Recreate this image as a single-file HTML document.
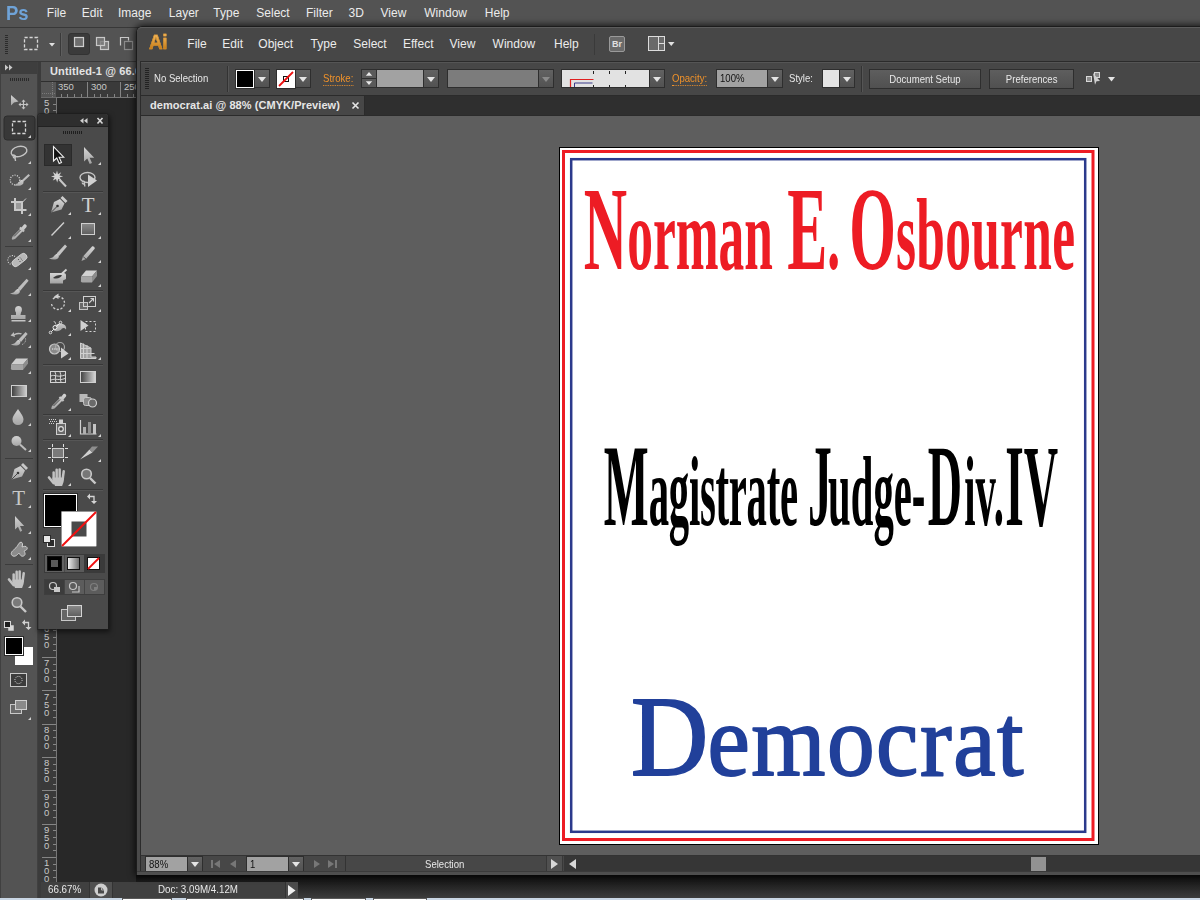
<!DOCTYPE html>
<html lang="en">
<head>
<meta charset="utf-8">
<title>democrat.ai</title>
<style>
*{box-sizing:border-box;margin:0;padding:0}
html,body{width:1200px;height:900px;overflow:hidden}
body{background:#535353;font-family:"Liberation Sans",sans-serif;font-size:12px;color:#e6e6e6;position:relative}
.abs,.abs>*{position:absolute}
.abs{position:absolute}
.t{position:absolute;white-space:nowrap;line-height:1}
svg{position:absolute;overflow:visible}
/* ---------- Photoshop ---------- */
#ps-menu{left:0;top:0;width:1200px;height:27px;background:#535353}
#ps-menu .t{top:7px;font-size:12px;color:#ececec}
#ps-menu #ps-logo{left:6px;top:1.5px;font-size:21px;font-weight:bold;color:#6fa3d8;transform:scaleX(.88);transform-origin:0 0}
#ps-opt{left:0;top:27px;width:140px;height:35px;background:#535353;border-top:1px solid #383838;border-bottom:1px solid #383838}
#ps-tools{left:0;top:62px;width:38px;height:836px;background:#535353}
#ps-tools-h{left:0;top:62px;width:38px;height:12px;background:#3e3e3e}
#ps-gap{left:38px;top:62px;width:3px;height:836px;background:#3b3b3b}
#ps-tab{left:41px;top:62px;width:100px;height:19px;background:#535353}
#ps-rh{left:41px;top:81px;width:100px;height:17px;background:#3a3a3a;border-bottom:1px solid #6a6a6a}
#ps-rc{left:41px;top:81px;width:16px;height:16px;background:#555}
#ps-rv{left:41px;top:98px;width:16px;height:784px;background:#3a3a3a;border-right:1px solid #6a6a6a}
#ps-canvas{left:57px;top:98px;width:90px;height:784px;background:#282828}
#ps-status{left:41px;top:882px;width:257px;height:16px;background:#404040}
#ps-status .t{top:2px;font-size:11px;color:#e8e8e8;transform:scaleX(.89);transform-origin:0 50%}
#bottom-strip{left:0;top:898px;width:1200px;height:2px;background:#c9d6e4}
.sel{background:#3a3a3a;border-radius:3px;box-shadow:inset 0 0 0 1px #303030}
/* ---------- Illustrator ---------- */
#ai-shadow{left:136px;top:26px;width:1071px;height:849px;border-radius:6px 0 0 0;box-shadow:0 0 7px 1px rgba(0,0,0,.75)}
#ai-win{left:136px;top:26px;width:1071px;height:849px;background:#4a4a4a;border-radius:6px 0 0 0;border:1px solid #1c1c1c;border-bottom:0}
#ai-menu{left:137px;top:27px;width:1063px;height:34px;background:#474747;border-top:1px solid #5c5c5c;border-radius:5px 0 0 0}
#ai-menu .t{top:9px;font-size:12px;color:#ececec}
#ai-menu #ai-logo{left:10.5px;top:1.5px;-webkit-text-stroke:.5px #d9922c;font-size:21px;font-weight:bold;color:#e39a2e;letter-spacing:-.5px;transform:scaleX(.9);transform-origin:0 0;background:linear-gradient(#f2b65a 20%,#c9801c 80%);-webkit-background-clip:text;background-clip:text;-webkit-text-fill-color:transparent}
#ai-ctrl{left:140px;top:61px;width:1060px;height:35px;background:#474747;border-top:1px solid #2b2b2b;border-bottom:1px solid #2b2b2b;border-left:1px solid #2b2b2b;box-shadow:inset 0 1px 0 #555}
#ai-ctrl .t{top:11px;font-size:11px;color:#e8e8e8;transform:scaleX(.87);transform-origin:0 50%}
#ai-ctrl .o{color:#f0922a;border-bottom:1px dotted #f0922a;padding-bottom:1px}
.fld{position:absolute;top:7px;height:19px;background:#a2a2a2;border:1px solid #2e2e2e;color:#111;font-size:11px;line-height:17px;padding-left:3px}
.fld i,.btn i{font-style:normal;display:inline-block;transform:scaleX(.87);transform-origin:0 50%;white-space:nowrap}
.btn i{transform-origin:50% 50%}
.dd{position:absolute;top:7px;height:19px;width:16px;background:linear-gradient(#626262,#525252);border:1px solid #2e2e2e}
.dd:after{content:"";position:absolute;left:3px;top:6.5px;border:4px solid transparent;border-top:5px solid #e4e4e4;border-bottom:0}
.dd.dis:after{border-top-color:#8a8a8a}
.btn{position:absolute;top:7px;height:20px;background:linear-gradient(#5e5e5e,#505050);border:1px solid #2e2e2e;color:#e8e8e8;font-size:11px;line-height:18px;text-align:center}
#ai-tabbar{left:140px;top:96px;width:1060px;height:20px;background:#2f2f2f;border-left:1px solid #2b2b2b}
#ai-tab{left:141px;top:96px;width:224px;height:19px;background:#474747;border-right:1px solid #2b2b2b}
#ai-tab .t{left:8px;top:4px;font-size:11px;font-weight:bold;color:#e6e6e6;letter-spacing:.06px}
#ai-canvas{left:140px;top:115px;width:1060px;height:740px;background:#5e5e5e;border-left:1px solid #2b2b2b;border-top:1px solid #2b2b2b}
#ai-status{left:140px;top:855px;width:1060px;height:16px;background:#474747;border-left:1px solid #2b2b2b;border-top:1px solid #333}
#ai-status .t{top:4px;font-size:11px;color:#e8e8e8;transform:scaleX(.87);transform-origin:0 50%}
#ai-status .fld,#ai-status .dd{top:0;height:16px;line-height:15px}
#ai-status .dd:after{top:5px}
#artboard{left:559px;top:147px;width:540px;height:698px;background:#fff;border:1px solid #000}
#ai-ctrl>*,#ai-status>*,#ai-tab>*{margin-left:1px}
#ai-menu>*{margin-left:1px;margin-top:1px}
/* floating tool panel */
#ai-tp{left:38px;top:114px;width:70px;height:515px;background:#4a4a4a;border-radius:3px 3px 0 0;box-shadow:0 0 0 1px rgba(30,30,30,.55),1px 2px 5px 1px rgba(0,0,0,.55)}
#ai-tp-h{left:38px;top:114px;width:70px;height:13px;background:#2e2e2e;border-radius:3px 3px 0 0;border-bottom:1px solid #222}
</style>
</head>
<body>
<!-- Photoshop window -->
<div class="abs" id="ps-menu">
  <span class="t" id="ps-logo">Ps</span>
  <span class="t" style="left:46.8px">File</span>
  <span class="t" style="left:81.8px">Edit</span>
  <span class="t" style="left:118px">Image</span>
  <span class="t" style="left:168.8px">Layer</span>
  <span class="t" style="left:213.3px">Type</span>
  <span class="t" style="left:256.3px">Select</span>
  <span class="t" style="left:306px">Filter</span>
  <span class="t" style="left:348.5px">3D</span>
  <span class="t" style="left:380.5px">View</span>
  <span class="t" style="left:424.3px">Window</span>
  <span class="t" style="left:484.8px">Help</span>
</div>
<div class="abs" id="ps-opt"></div>
<svg id="ps-opt-i" style="left:0;top:27px" width="140" height="35" viewBox="0 27 140 35">
  <path d="M5 35.5h3M5 37.5h3M5 39.5h3M5 41.5h3M5 43.5h3M5 45.5h3M5 47.5h3M5 49.5h3M5 51.5h3M5 53.5h3" stroke="#2c2c2c" stroke-width="1"/>
  <rect x="24.500" y="37.500" width="13" height="12" fill="none" stroke="#d6d6d6" stroke-width="1.300" stroke-dasharray="3.200 1.800"/>
  <path d="M49 43h6l-3 3.500z" fill="#e0e0e0"/>
  <rect x="60" y="33" width="1" height="23" fill="#3a3a3a"/><rect x="61" y="33" width="1" height="23" fill="#5e5e5e"/>
  <rect x="68.500" y="33.500" width="21" height="21" rx="2.500" fill="#3b3b3b" stroke="#333" stroke-width="1"/>
  <rect x="74.500" y="37.500" width="9" height="9" fill="#6e6e6e" stroke="#cfcfcf" stroke-width="1.200"/>
  <rect x="100.500" y="41.500" width="8" height="8" fill="#7a7a7a" stroke="#c8c8c8" stroke-width="1.200"/>
  <rect x="96.500" y="37.500" width="8" height="8" fill="#7a7a7a" fill-opacity=".8" stroke="#c8c8c8" stroke-width="1.200"/>
  <rect x="124.500" y="41.500" width="8" height="8" fill="#4a4a4a" stroke="#8a8a8a" stroke-width="1.200"/>
  <path d="M120.500 45.500v-8h8v3" fill="none" stroke="#c8c8c8" stroke-width="1.200"/>
</svg>
<div class="abs" id="ps-tools"></div>
<div class="abs" id="ps-tools-h"></div>
<svg id="ps-icons" style="left:0;top:62px" width="38" height="836" viewBox="0 62 38 836">
  <defs>
    <linearGradient id="gi" x1="0" y1="0" x2="0" y2="1"><stop offset="0" stop-color="#d2d2d2"/><stop offset="1" stop-color="#a6a6a6"/></linearGradient>
    <linearGradient id="gh" x1="0" y1="0" x2="1" y2="0"><stop offset="0" stop-color="#3c3c3c"/><stop offset="1" stop-color="#d0d0d0"/></linearGradient>
    <path id="tri" d="M0 3 L3 3 L3 0 Z" fill="#d0d0d0"/>
  </defs>
  <rect x="0" y="62" width="1" height="836" fill="#404040"/>
  <rect x="37" y="62" width="1" height="836" fill="#404040"/>
  <!-- header arrows -->
  <path d="M5 64.5 L8.5 67.5 L5 70.5 Z M9 64.5 L12.5 67.5 L9 70.5 Z" fill="#c8c8c8"/>
  <!-- grip -->
  <path d="M10.5 78V81M12.5 78V81M14.5 78V81M16.5 78V81M18.5 78V81M20.5 78V81M22.5 78V81M24.5 78V81M26.5 78V81M28.5 78V81" stroke="#2a2a2a" stroke-width="1"/>
  <!-- move -->
  <path d="M11 95 L11 105.5 L14 102.5 L18.5 101.5 Z" fill="url(#gi)"/>
  <path d="M19.5 104.5H27.5M23.5 100.5V108.5" stroke="#c4c4c4" stroke-width="1.2" fill="none"/>
  <path d="M23.5 99.5l-2 2.2h4zM23.5 109.5l-2-2.2h4zM18.5 104.5l2.2-2v4zM28.5 104.5l-2.2-2v4z" fill="#c4c4c4"/>
  <!-- marquee (selected) -->
  <rect x="4" y="116" width="31" height="24" rx="3" fill="#383838" stroke="#2c2c2c" stroke-width="1"/>
  <rect x="12.5" y="121.5" width="13" height="12" fill="none" stroke="#d6d6d6" stroke-width="1.3" stroke-dasharray="3.2 1.8"/>
  <use href="#tri" x="28" y="135"/>
  <!-- lasso -->
  <g fill="none" stroke="#c4c4c4" stroke-width="1.4">
    <ellipse cx="19" cy="151.5" rx="8" ry="5" transform="rotate(-14 19 151.5)"/>
    <path d="M12 155.5c2-1 4 0 3.5 1.5s-2.5 1-2-.5M15 157.5l.5 3.5"/>
  </g>
  <use href="#tri" x="28" y="161"/>
  <!-- quick selection -->
  <circle cx="15" cy="180" r="4.8" fill="none" stroke="#d6d6d6" stroke-width="1.2" stroke-dasharray="1.1 1.3"/>
  <path d="M28.5 174 L30 175.5 L23 182 L21.5 180.5 Z" fill="#bdbdbd"/>
  <path d="M22 180c1.5 1 2 2.5 1 4-2 2-6 2.5-9.5 1 3-.5 5-2 6-3.5 .8-1.2 1.5-1.8 2.5-1.5z" fill="url(#gi)"/>
  <use href="#tri" x="28" y="187"/>
  <!-- crop -->
  <g fill="none" stroke="#c8c8c8" stroke-width="2">
    <path d="M15 198V210H26.5M11 202H22V214"/>
  </g>
  <path d="M16.5 208.5L26 198.5" stroke="#c8c8c8" stroke-width="1"/>
  <rect x="16" y="203" width="5" height="6" fill="#9a9a9a"/>
  <use href="#tri" x="28" y="213"/>
  <!-- eyedropper -->
  <path d="M24 224.5c1.5-1 3.5 1 2.5 2.5l-2.5 3 .8 .8-1.5 1.5-.8-.8-7.5 7.5-2.5 .8-.8-.8 .8-2.5 7.5-7.5-.8-.8 1.5-1.5 .8 .8z" fill="url(#gi)"/>
  <path d="M14 236.5l6.5-6.5" stroke="#4a4a4a" stroke-width="1"/>
  <use href="#tri" x="28" y="239"/>
  <rect x="5" y="246" width="28" height="1" fill="#3c3c3c"/>
  <!-- healing brush -->
  <path d="M15 256.5a4.5 4.5 0 1 0-3.5 8" fill="none" stroke="#d6d6d6" stroke-width="1.1" stroke-dasharray="1 1.3"/>
  <rect x="11" y="256.5" width="17" height="7" rx="3.5" fill="#b8b8b8" stroke="#d8d8d8" stroke-width=".8" transform="rotate(-38 19.5 260)"/>
  <path d="M18 259l1 1M20 257.5l1 1M19.5 261l1 1M21.5 259.5l1 1" stroke="#555" stroke-width="1"/>
  <use href="#tri" x="28" y="267"/>
  <!-- brush -->
  <path d="M26.6 278.8l2 2-8.4 9.9-2.4-2.4z" fill="#bdbdbd"/>
  <path d="M18.5 289c1.5 1 1.8 2.5 .8 4-2 2-6 1.8-9.3 .5 3-.5 4.5-1.5 5.5-3 .8-1.2 2-1.8 3-1.5z" fill="url(#gi)"/>
  <use href="#tri" x="28" y="293"/>
  <!-- stamp -->
  <path d="M16 312.5c-1.5-2-1.5-6.5 2.5-6.5s4 4.5 2.5 6.5l-.5 2.5h5v4h-14.5v-4h5z" fill="url(#gi)"/>
  <rect x="11.5" y="320" width="14" height="1.5" fill="#c4c4c4"/>
  <use href="#tri" x="28" y="319"/>
  <!-- history brush -->
  <path d="M25.6 332l2 2-6.6 8-2.4-2.4z" fill="#bdbdbd"/>
  <path d="M19 340c1.5 1 1.8 2.5 .8 4-2 2-6 1.8-9 .5 3-.5 4.5-1.5 5.5-3 .7-1.2 1.7-1.8 2.7-1.5z" fill="url(#gi)"/>
  <path d="M22 333.5c-2.5-1-5-1-8 .5l0-2-3.5 3.5 4.5 1.5-.5-1.8c2.5-1 4.5-1.2 6.5-.7z" fill="#bdbdbd"/>
  <path d="M25.5 338.5a5 5 0 0 1-3.5 6" fill="none" stroke="#d0d0d0" stroke-width="1" stroke-dasharray="1 1.2"/>
  <use href="#tri" x="28" y="345"/>
  <!-- eraser -->
  <path d="M16 358.5h12l-5 6h-12z" fill="#cfcfcf"/>
  <path d="M11 364.5h12v5.5h-10.5c-1.5 0-2-1-1.5-2.5z" fill="#a4a4a4"/>
  <path d="M23 364.5l5-6v5l-5 6.5z" fill="#8e8e8e"/>
  <use href="#tri" x="28" y="371"/>
  <!-- gradient -->
  <rect x="11.5" y="385.5" width="15" height="11" fill="url(#gh)" stroke="#cfcfcf" stroke-width="1"/>
  <use href="#tri" x="28" y="397"/>
  <!-- blur drop -->
  <path d="M18 409c2.5 4 5.5 7 5.5 10.5a5.5 5.5 0 0 1-11 0c0-3.5 3-6.5 5.5-10.5z" fill="url(#gi)"/>
  <use href="#tri" x="28" y="423"/>
  <!-- dodge -->
  <circle cx="16.5" cy="441" r="5" fill="url(#gi)"/>
  <path d="M20 444.5l6 5.5" stroke="#bdbdbd" stroke-width="2"/>
  <use href="#tri" x="28" y="449"/>
  <rect x="5" y="458" width="28" height="1" fill="#3c3c3c"/>
  <!-- pen -->
  <path d="M23 463l5 5-2 2-5-5z" fill="#c8c8c8"/>
  <path d="M20.5 466l4.5 4.5-3 6-10.5 3 3-10.5z" fill="url(#gi)"/>
  <path d="M11.5 479.5l6-6" stroke="#4a4a4a" stroke-width="1"/>
  <circle cx="18" cy="473" r="1.3" fill="#3a3a3a"/>
  <use href="#tri" x="28" y="479"/>
  <!-- T -->
  <text x="18.7" y="504.5" text-anchor="middle" font-family="'Liberation Serif',serif" font-size="21" fill="#c8c8c8">T</text>
  <use href="#tri" x="28" y="505"/>
  <!-- path selection -->
  <path d="M15 516v13.5l3-2.8 2.2 5 2-.9-2.2-4.9h4.2z" fill="url(#gi)"/>
  <use href="#tri" x="28" y="531"/>
  <!-- custom shape blob -->
  <path d="M20 542.5c1.5-1 3 .5 2.5 2.5l-.5 2c1.5-.5 4-1.5 5 .5s-1.5 3-3 3.5c1 1.5 2 4-.5 5s-3.5-1.5-4.5-3c-1.5 1.5-3.5 4-6 3s-2-3.5-.5-5 3-2.5 4.5-4.5 1.5-3 3-4z" fill="#8c8c8c" stroke="#cfcfcf" stroke-width="1"/>
  <use href="#tri" x="28" y="557"/>
  <rect x="5" y="564" width="28" height="1" fill="#3c3c3c"/>
  <!-- hand -->
  <g fill="#c2c2c2" stroke="none"><rect x="12.4" y="573.2" width="2.5" height="9" rx="1.2"/><rect x="15.4" y="570.6" width="2.5" height="11" rx="1.2"/><rect x="18.4" y="570.2" width="2.5" height="11" rx="1.2"/><rect x="21.4" y="572" width="2.5" height="10" rx="1.2" transform="rotate(8 22.6 581)"/><path d="M12.4 579.5h11.7c0 4-1 5.5-2 8.5h-7c-1.2-2.5-2.7-4.5-2.7-8.5z"/><path d="M13.5 585l-4.5-5.5" stroke="#c2c2c2" stroke-width="2.6" stroke-linecap="round"/></g>
  <use href="#tri" x="28" y="585"/>
  <!-- zoom -->
  <circle cx="17" cy="602.5" r="4.8" fill="#7a7a7a" stroke="#c8c8c8" stroke-width="1.6"/>
  <path d="M20.5 606.5l5.5 5.5" stroke="#c8c8c8" stroke-width="2.4"/>
  <!-- default colours -->
  <rect x="8" y="625" width="6" height="6" fill="#d8d8d8" stroke="#555" stroke-width=".5"/>
  <rect x="4.5" y="621.5" width="6" height="6" fill="#1e1e1e" stroke="#d8d8d8" stroke-width="1"/>
  <!-- swap arrows -->
  <path d="M24 622.5h4.5v5" fill="none" stroke="#d0d0d0" stroke-width="1.3"/>
  <path d="M25 619.5v6l-3-3zM25.5 627h6l-3 3z" fill="#d0d0d0"/>
  <!-- fg / bg -->
  <rect x="15" y="647" width="18" height="18" fill="#fff"/>
  <rect x="4.5" y="636.5" width="19" height="19" fill="#fff" stroke="#2a2a2a" stroke-width="1"/>
  <rect x="6" y="638" width="16" height="16" fill="#000"/>
  <!-- quick mask -->
  <rect x="10.5" y="673.5" width="16" height="13" fill="#3c3c3c" stroke="#c8c8c8" stroke-width="1"/>
  <circle cx="18.5" cy="680" r="3.6" fill="none" stroke="#e0e0e0" stroke-width="1" stroke-dasharray="1 1.2"/>
  <!-- screen mode -->
  <rect x="10.5" y="704.5" width="11" height="9" fill="#6a6a6a" stroke="#c8c8c8" stroke-width="1"/>
  <rect x="15.5" y="700.5" width="11" height="9" fill="#8a8a8a" stroke="#d0d0d0" stroke-width="1"/>
  <use href="#tri" x="28" y="717"/>
</svg>
<div class="abs" id="ps-gap"></div>
<div class="abs" id="ps-tab"><span class="t" style="left:9px;top:4px;font-size:11px;font-weight:bold;letter-spacing:.13px;color:#e4e4e4">Untitled-1 @ 66.67% (RGB/8)</span></div>
<div class="abs" id="ps-rh"></div>
<div class="abs" id="ps-rv"></div>
<svg id="ps-rulers" style="left:41px;top:81px" width="100" height="801" viewBox="41 81 100 801">
<rect x="41" y="81" width="100" height="1" fill="#2e2e2e"/>
<rect x="41" y="82" width="15" height="15" fill="#555"/>
<path d="M52.5 82v15M42 93.5h14" stroke="#7a7a7a" stroke-width="1" stroke-dasharray="1 1"/>
<path d="M61.5 94V97M67.5 94V97M74.5 94V97M81.5 94V97M87.5 82V97M94.5 94V97M100.5 94V97M107.5 94V97M114.5 94V97M120.5 82V97M127.5 94V97M133.5 94V97M140.5 94V97" stroke="#858585" stroke-width="1"/>
<rect x="56" y="97" width="85" height="1" fill="#777"/>
<rect x="56" y="97" width="1" height="785" fill="#777"/>
<g font-family="'Liberation Sans',sans-serif" font-size="9.5" fill="#c8c8c8">
<text x="58" y="89.8">350</text><text x="91" y="89.8">300</text><text x="124" y="89.8">250</text>
<text x="44" y="105.5">5<tspan x="44" dy="8">0</tspan></text>
<text x="44" y="631.5">6<tspan x="44" dy="8">5</tspan><tspan x="44" dy="8">0</tspan></text>
<text x="44" y="666.1">7<tspan x="44" dy="8">0</tspan><tspan x="44" dy="8">0</tspan></text>
<text x="44" y="699.5">7<tspan x="44" dy="8">5</tspan><tspan x="44" dy="8">0</tspan></text>
<text x="44" y="732.8">8<tspan x="44" dy="8">0</tspan><tspan x="44" dy="8">0</tspan></text>
<text x="44" y="766.1">8<tspan x="44" dy="8">5</tspan><tspan x="44" dy="8">0</tspan></text>
<text x="44" y="799.5">9<tspan x="44" dy="8">0</tspan><tspan x="44" dy="8">0</tspan></text>
<text x="44" y="832.8">9<tspan x="44" dy="8">5</tspan><tspan x="44" dy="8">0</tspan></text>
<text x="44" y="866.1">1<tspan x="44" dy="8">0</tspan><tspan x="44" dy="8">0</tspan><tspan x="44" dy="8">0</tspan></text>
</g>
<path d="M53 104.5H56M53 110.5H56M53 117.5H56M42 124.5H56M53 130.5H56M53 137.5H56M53 144.5H56M53 150.5H56M42 157.5H56M53 164.5H56M53 170.5H56M53 177.5H56M53 184.5H56M42 190.5H56M53 197.5H56M53 204.5H56M53 210.5H56M53 217.5H56M42 224.5H56M53 230.5H56M53 237.5H56M53 244.5H56M53 250.5H56M42 257.5H56M53 264.5H56M53 270.5H56M53 277.5H56M53 284.5H56M42 290.5H56M53 297.5H56M53 304.5H56M53 310.5H56M53 317.5H56M42 324.5H56M53 330.5H56M53 337.5H56M53 344.5H56M53 350.5H56M42 357.5H56M53 364.5H56M53 370.5H56M53 377.5H56M53 384.5H56M42 390.5H56M53 397.5H56M53 404.5H56M53 410.5H56M53 417.5H56M42 424.5H56M53 430.5H56M53 437.5H56M53 444.5H56M53 450.5H56M42 457.5H56M53 464.5H56M53 470.5H56M53 477.5H56M53 484.5H56M42 490.5H56M53 497.5H56M53 504.5H56M53 510.5H56M53 517.5H56M42 524.5H56M53 530.5H56M53 537.5H56M53 544.5H56M53 550.5H56M42 557.5H56M53 564.5H56M53 570.5H56M53 577.5H56M53 584.5H56M42 590.5H56M53 597.5H56M53 604.5H56M53 610.5H56M53 617.5H56M42 624.5H56M53 630.5H56M53 637.5H56M53 644.5H56M53 650.5H56M42 657.5H56M53 664.5H56M53 670.5H56M53 677.5H56M53 684.5H56M42 690.5H56M53 697.5H56M53 704.5H56M53 710.5H56M53 717.5H56M42 724.5H56M53 730.5H56M53 737.5H56M53 744.5H56M53 750.5H56M42 757.5H56M53 764.5H56M53 770.5H56M53 777.5H56M53 784.5H56M42 790.5H56M53 797.5H56M53 804.5H56M53 810.5H56M53 817.5H56M42 824.5H56M53 830.5H56M53 837.5H56M53 844.5H56M53 850.5H56M42 857.5H56M53 864.5H56M53 870.5H56M53 877.5H56" stroke="#858585" stroke-width="1"/>
</svg>
<div class="abs" id="ps-canvas"></div>
<div class="abs" id="ps-under" style="left:136px;top:875px;width:1064px;height:23px;background:linear-gradient(#0d0d0d,#3c3c3c)"></div>
<div class="abs" id="ps-status">
  <span class="t" style="left:7px">66.67%</span>
  <div style="position:absolute;left:48px;top:0;width:24px;height:16px;background:#505050;border-left:1px solid #333;border-right:1px solid #333"></div>
  <svg style="left:53px;top:1px" width="14" height="14" viewBox="0 0 14 14"><circle cx="7" cy="7" r="6.5" fill="#cfcfcf"/><path d="M4 4.5h3.5l2.5 2.5v3.5h-6z" fill="#4a4a4a"/><path d="M7.5 4.5v2.5h2.5" fill="none" stroke="#cfcfcf" stroke-width=".8"/></svg>
  <span class="t" style="left:117px">Doc: 3.09M/4.12M</span>
  <div style="position:absolute;left:244px;top:0;width:13px;height:16px;background:#4c4c4c;border-left:1px solid #333"></div>
  <svg style="left:247px;top:3px" width="8" height="11" viewBox="0 0 8 11"><path d="M0 0v11l7.5-5.5z" fill="#f0f0f0"/></svg>
</div>
<div class="abs" id="bottom-strip"><div style="position:absolute;left:122px;top:0;width:50px;height:2px;background:#fff;border-top:1px solid #5a5a5a;border-left:1px solid #5a5a5a;border-right:1px solid #5a5a5a"></div><div style="position:absolute;left:186px;top:0;width:118px;height:2px;background:#fff;border-top:1px solid #5a5a5a;border-left:1px solid #5a5a5a;border-right:1px solid #5a5a5a"></div><div style="position:absolute;left:311px;top:0;width:55px;height:2px;background:#fff;border-top:1px solid #5a5a5a;border-left:1px solid #5a5a5a;border-right:1px solid #5a5a5a"></div><div style="position:absolute;left:373px;top:0;width:54px;height:2px;background:#fff;border-top:1px solid #5a5a5a;border-left:1px solid #5a5a5a;border-right:1px solid #5a5a5a"></div></div>

<!-- Illustrator window -->
<div class="abs" id="ai-shadow"></div>
<div class="abs" id="ai-win"></div>
<div class="abs" id="ai-menu">
  <span class="t" id="ai-logo">Ai</span>
  <span class="t" style="left:49.3px">File</span>
  <span class="t" style="left:84.3px">Edit</span>
  <span class="t" style="left:120.3px">Object</span>
  <span class="t" style="left:172.6px">Type</span>
  <span class="t" style="left:215.3px">Select</span>
  <span class="t" style="left:265px">Effect</span>
  <span class="t" style="left:311.5px">View</span>
  <span class="t" style="left:354.6px">Window</span>
  <span class="t" style="left:416px">Help</span>
  <div style="position:absolute;left:456px;top:5px;width:1px;height:21px;background:#3a3a3a"></div>
  <div style="position:absolute;left:471px;top:7px;width:16px;height:16px;background:#6a6a6a;border:1px solid #9a9a9a;border-radius:2px;color:#e0e0e0;font-size:9px;font-weight:bold;line-height:14px;text-align:center">Br</div>
  <svg style="left:510px;top:7px" width="30" height="16" viewBox="0 0 30 16"><rect x=".5" y=".5" width="16" height="14" fill="#6a6a6a" stroke="#dcdcdc"/><path d="M10.5 1v14M10.5 7.5h6" stroke="#dcdcdc" stroke-width="1"/><path d="M20 6h6.5l-3.25 4z" fill="#e0e0e0"/></svg>
</div>
<div class="abs" id="ai-ctrl">
  <svg style="left:3px;top:6px" width="5" height="22" viewBox="0 0 5 22"><path d="M0 .5h4M0 2.5h4M0 4.5h4M0 6.5h4M0 8.5h4M0 10.5h4M0 12.5h4M0 14.5h4M0 16.5h4M0 18.5h4M0 20.5h4" stroke="#222" stroke-width="1"/></svg>
  <span class="t" style="left:12px">No Selection</span>
  <div style="position:absolute;left:85px;top:4px;width:1px;height:26px;background:#333"></div>
  <div style="position:absolute;left:86px;top:4px;width:1px;height:26px;background:#555"></div>
  <div style="position:absolute;left:94px;top:8px;width:18px;height:18px;background:#000;border:1px solid #fff;outline:1px solid #2e2e2e"></div>
  <div class="dd" style="left:112px"></div>
  <div style="position:absolute;left:135px;top:8px;width:18px;height:18px;background:#fff;outline:1px solid #2e2e2e"></div>
  <svg style="left:135px;top:8px" width="18" height="18" viewBox="0 0 18 18"><rect x="6.5" y="6.5" width="5" height="5" fill="none" stroke="#111" stroke-width="1"/><path d="M2 16L16 2" stroke="#ee1111" stroke-width="1.8"/></svg>
  <div class="dd" style="left:153px"></div>
  <span class="t o" style="left:181px">Stroke:</span>
  <svg style="left:219px;top:7px" width="16" height="19" viewBox="0 0 16 19"><rect x=".5" y=".5" width="15" height="18" fill="#5a5a5a" stroke="#2e2e2e"/><path d="M1 9.5h14" stroke="#2e2e2e"/><path d="M8 3l3.2 3.8h-6.4zM8 16l3.2-3.8h-6.4z" fill="#e8e8e8"/></svg>
  <div class="fld" style="left:234px;width:48px"></div>
  <div class="dd" style="left:281px"></div>
  <div class="fld" style="left:305px;width:92px;background:#7c7c7c"></div>
  <div class="dd dis" style="left:396px"></div>
  <div class="fld" style="left:419px;width:89px;background:#e2e2e2"></div>
  <svg style="left:419px;top:8px" width="89" height="18" viewBox="0 0 89 18"><path d="M32.5 1v3M48.5 1v3M64.5 1v3M32.5 15v2M48.5 15v2M64.5 15v2" stroke="#222"/><path d="M9.5 17v-7.5h23" fill="none" stroke="#e02020" stroke-width="1.2"/><path d="M13.5 17v-4h18" fill="none" stroke="#3a3a8a" stroke-width="1"/></svg>
  <div class="dd" style="left:507px"></div>
  <span class="t o" style="left:530px">Opacity:</span>
  <div class="fld" style="left:574px;width:52px"><i>100%</i></div>
  <div class="dd" style="left:625px"></div>
  <span class="t" style="left:647px">Style:</span>
  <div class="fld" style="left:680px;width:18px;background:#e4e4e4"></div>
  <div class="dd" style="left:697px"></div>
  <div style="position:absolute;left:719px;top:4px;width:1px;height:26px;background:#333"></div>
  <div style="position:absolute;left:720px;top:4px;width:1px;height:26px;background:#555"></div>
  <div class="btn" style="left:727px;width:112px"><i>Document Setup</i></div>
  <div class="btn" style="left:847px;width:85px"><i>Preferences</i></div>
  <svg style="left:942px;top:8px" width="32" height="18" viewBox="0 0 32 18"><rect x="2.5" y="6.5" width="5" height="5" fill="#8a8a8a" stroke="#d8d8d8"/><rect x="10.5" y="2.5" width="5" height="5" fill="#8a8a8a" stroke="#d8d8d8"/><path d="M9 3l7 8-3.5 .3-1.5 3.5z" fill="#d0d0d0"/><path d="M24 7h7l-3.5 4.5z" fill="#e4e4e4"/></svg>
</div>
<div class="abs" id="ai-tabbar"></div>
<div class="abs" id="ai-tab"><span class="t">democrat.ai @ 88% (CMYK/Preview)</span><svg style="left:210px;top:6px" width="7" height="7" viewBox="0 0 7 7"><path d="M.5 .5l6 6M6.5 .5l-6 6" stroke="#e6e6e6" stroke-width="1.6"/></svg></div>
<div class="abs" id="ai-canvas"></div>
<div class="abs" id="ai-status">
  <div class="fld" style="left:3px;width:43px"><i>88%</i></div>
  <div class="dd" style="left:45px"></div>
  <svg style="left:64px;top:3px" width="140" height="11" viewBox="0 0 140 11"><g fill="#777"><path d="M5 1h2v8h-2zM14 1v8l-6-4z"/><path d="M30 1v8l-6-4z"/><path d="M108 1v8l6-4z"/><path d="M122 1v8l6-4zM129 1h2v8h-2z"/></g></svg>
  <div class="fld" style="left:104px;width:43px"><i>1</i></div>
  <div class="dd" style="left:146px"></div>
  <div style="position:absolute;left:203px;top:0;width:1px;height:16px;background:#333"></div>
  <span class="t" style="left:283px;top:3px">Selection</span>
  <div style="position:absolute;left:404px;top:0;width:17px;height:16px;background:#505050;border-left:1px solid #383838;border-right:1px solid #383838"></div>
  <svg style="left:409px;top:3px" width="8" height="10" viewBox="0 0 8 10"><path d="M0 0v10l7-5z" fill="#d8d8d8"/></svg>
  <div style="position:absolute;left:422px;top:0;width:640px;height:16px;background:#363636"></div>
  <svg style="left:427px;top:3px" width="8" height="10" viewBox="0 0 8 10"><path d="M7 0v10l-7-5z" fill="#d8d8d8"/></svg>
  <div style="position:absolute;left:889px;top:1px;width:15px;height:14px;background:#929292"></div>
</div>
<div class="abs" style="left:137px;top:871px;width:1063px;height:4px;background:#4e4e4e;border-top:1px solid #3a3a3a"></div>
<div class="abs" id="artboard"></div>
<svg id="art" style="left:560px;top:148px" width="538" height="696" viewBox="560 148 538 696">
  <rect x="563.5" y="151.5" width="529.5" height="688" fill="none" stroke="#ed1c24" stroke-width="3"/>
  <rect x="571.2" y="159.2" width="514" height="672.6" fill="none" stroke="#2b3a8c" stroke-width="2.5"/>
  <text id="tx1" transform="translate(583.8 269) scale(0.5045 1)" font-family="'Liberation Serif',serif" font-weight="bold" font-size="102" fill="#ed1c24"><tspan font-size="119">N</tspan>orman <tspan font-size="119" dx="3">E</tspan>. <tspan font-size="119" dx="-7.6">O</tspan><tspan letter-spacing=".6">sbourne</tspan></text>
  <text id="tx2" transform="translate(603.8 524.5) scale(0.4075 1)" font-family="'Liberation Serif',serif" font-weight="bold" font-size="100" fill="#000"><tspan font-size="116.8">M</tspan><tspan letter-spacing="-.7">agistrate</tspan> <tspan font-size="116.8">J</tspan><tspan dx="-9">u</tspan>dge-<tspan font-size="116.8" dx="6">D</tspan><tspan dx="5">i</tspan>v.<tspan font-size="116.8" dx="3">IV</tspan></text>
  <text id="tx3" transform="translate(630.8 774.6) scale(0.935 1)" font-family="'Liberation Serif',serif" font-size="102" fill="#21409a" stroke="#21409a" stroke-width="1.8" stroke-linejoin="round" letter-spacing="1.6"><tspan font-size="115">D</tspan><tspan dx="-2.7">e</tspan>mocrat</text>
</svg>

<!-- Illustrator floating tools panel -->
<div class="abs" id="ai-tp"></div>
<div class="abs" id="ai-tp-h"></div>
<svg id="ai-icons" style="left:38px;top:114px" width="70" height="515" viewBox="38 114 70 515">
  <defs>
    <linearGradient id="ag" x1="0" y1="0" x2="0" y2="1"><stop offset="0" stop-color="#d6d6d6"/><stop offset="1" stop-color="#a2a2a2"/></linearGradient>
    <linearGradient id="agh" x1="0" y1="0" x2="1" y2="0"><stop offset="0" stop-color="#404040"/><stop offset="1" stop-color="#d8d8d8"/></linearGradient>
    <linearGradient id="agv" x1="0" y1="0" x2="0" y2="1"><stop offset="0" stop-color="#8a8a8a"/><stop offset="1" stop-color="#5e5e5e"/></linearGradient>
    <linearGradient id="agw" x1="0" y1="0" x2="1" y2="0"><stop offset="0" stop-color="#f4f4f4"/><stop offset="1" stop-color="#6a6a6a"/></linearGradient>
    <path id="atri" d="M0 3 L3 3 L3 0 Z" fill="#d4d4d4"/>
  </defs>
  <rect x="38" y="127" width="1" height="502" fill="#3e3e3e"/>
  <!-- header -->
  <path d="M83.5 118v5.5l-3.5-2.75zM87.5 118v5.5l-3.5-2.75z" fill="#d0d0d0"/>
  <path d="M97.5 118l5 5.5M102.5 118l-5 5.5" stroke="#d8d8d8" stroke-width="1.6"/>
  <path d="M63.5 131v3M65.5 131v3M67.5 131v3M69.5 131v3M71.5 131v3M73.5 131v3M75.5 131v3M77.5 131v3M79.5 131v3M81.5 131v3" stroke="#1e1e1e" stroke-width="1"/>
  <!-- selection (selected) -->
  <rect x="44.5" y="144.5" width="27" height="21" fill="#333" stroke="#2a2a2a"/>
  <path d="M53.5 146.5v14.5l3.3-3 2.4 5.5 2.3-1-2.4-5.3h4.6z" fill="#111" stroke="#f0f0f0" stroke-width="1.1" stroke-linejoin="miter"/>
  <!-- direct selection -->
  <path d="M84 147v14.5l3.3-3 2.4 5.5 2.3-1-2.4-5.3h4.6z" fill="url(#ag)"/>
  <use href="#atri" x="98" y="162"/>
  <!-- magic wand -->
  <path d="M57 170.5l1 3.7 3.2-2-1.8 3.3 3.8 .7-3.7 1.2 2 3-3.3-1.5-1 3.6-1.2-3.6-3.2 1.7 1.7-3.2-3.5-1 3.6-1-1.8-3.3 3.2 1.8z" fill="#d4d4d4"/>
  <path d="M59.5 179.5l6.5 7" stroke="#c8c8c8" stroke-width="2"/>
  <!-- lasso + arrow -->
  <g fill="none" stroke="#c4c4c4" stroke-width="1.4"><ellipse cx="87.5" cy="177.5" rx="7.5" ry="5"/><path d="M82 181.5c1.5-.8 3 0 2.5 1.5s-2.5 1-2-.5M84.5 183.5l.3 3"/></g>
  <path d="M88 174.5v12.5l9-6.5z" fill="#d0d0d0"/>
  <rect x="43" y="191" width="60" height="1" fill="#383838"/><rect x="43" y="192" width="60" height="1" fill="#565656"/>
  <!-- pen -->
  <path d="M62.5 196l5 5-2 2-5-5z" fill="#cdcdcd"/>
  <path d="M60 199l4.5 4.5-3 6-10.5 3 3-10.5z" fill="url(#ag)"/>
  <path d="M51 212.5l6-6" stroke="#444" stroke-width="1"/><circle cx="57.5" cy="206" r="1.3" fill="#333"/>
  <use href="#atri" x="68" y="212"/>
  <!-- T -->
  <text x="88.2" y="211.5" text-anchor="middle" font-family="'Liberation Serif',serif" font-size="21" fill="#d0d0d0">T</text>
  <use href="#atri" x="98" y="212"/>
  <!-- line -->
  <path d="M51.5 235.5l12.5-13" stroke="#cfcfcf" stroke-width="1.4"/>
  <use href="#atri" x="68" y="236"/>
  <!-- rectangle -->
  <rect x="81.5" y="223.5" width="13" height="11" fill="url(#agv)" stroke="#cfcfcf"/>
  <use href="#atri" x="98" y="236"/>
  <!-- brush -->
  <path d="M65 244.5l2 2-8 9.5-2.4-2.4z" fill="#c4c4c4"/>
  <path d="M57.5 254c1.5 1 1.8 2.5 .8 4-2 2-6 1.8-9.3 .5 3-.5 4.5-1.5 5.5-3 .8-1.2 2-1.8 3-1.5z" fill="url(#ag)"/>
  <!-- pencil -->
  <path d="M92 246.5c1-1 3.5 1 2.5 2.5l-8.5 10-4.5 2 1.5-4.5z" fill="url(#ag)"/>
  <path d="M83 256.5l3 2.5" stroke="#555" stroke-width="1"/>
  <use href="#atri" x="98" y="260"/>
  <!-- blob brush -->
  <path d="M50 273h13.5c2 0 2.5 1 2.5 2.5v3.5l-3 1.5v3h-13z" fill="url(#ag)"/>
  <path d="M53 278c2-2.5 6-3.5 9-3-1 3-5 4.5-9 3z" fill="#3c3c3c"/>
  <path d="M61 274.5l5.5-5" stroke="#d4d4d4" stroke-width="1.8"/>
  <!-- eraser -->
  <path d="M86 270.5h11l-5 6h-11z" fill="#d2d2d2"/>
  <path d="M81 276.5h11v6h-9.5c-1.5 0-2-1-1.5-2.5z" fill="#a6a6a6"/>
  <path d="M92 276.5l5-6v5.5l-5 6.5z" fill="#8c8c8c"/>
  <use href="#atri" x="98" y="284"/>
  <rect x="43" y="290" width="60" height="1" fill="#383838"/><rect x="43" y="291" width="60" height="1" fill="#565656"/>
  <!-- rotate -->
  <path d="M58 296.5a6.5 6.5 0 1 1-6.5 6.5" fill="none" stroke="#cfcfcf" stroke-width="1.3" stroke-dasharray="2.2 1.6"/>
  <path d="M58 296.5a6.5 6.5 0 0 0-5 2.5" fill="none" stroke="#cfcfcf" stroke-width="1.4"/>
  <path d="M58.5 293.5v5.5l-4.5-2.5z" fill="#cfcfcf"/>
  <use href="#atri" x="68" y="309"/>
  <!-- scale -->
  <rect x="79.5" y="302.5" width="8" height="7" fill="#6a6a6a" stroke="#c4c4c4"/>
  <rect x="83.5" y="296.5" width="12" height="10" fill="none" stroke="#d0d0d0"/>
  <path d="M89 303l4.5-4.5M90.5 298.5h3v3" fill="none" stroke="#d0d0d0" stroke-width="1.1"/>
  <use href="#atri" x="98" y="309"/>
  <!-- warp / width -->
  <path d="M53 321c2 0 3.5 1.5 3 4 2-1.5 5-2 8-.5 2 1 2.5 3 2 5-1-1.5-2.5-2-4-1-1.5 2.5-5.5 3.5-8.5 2 2-1 3-3 2.5-5-.5-2-1.5-3.5-3-4.5z" fill="url(#ag)"/>
  <path d="M50.5 332.5l10-10" stroke="#e8e8e8" stroke-width="1"/>
  <circle cx="55" cy="327.5" r="2" fill="#555" stroke="#f0f0f0" stroke-width="1"/><circle cx="50.5" cy="332.5" r="1.3" fill="#555" stroke="#f0f0f0" stroke-width=".8"/><circle cx="60.5" cy="322.5" r="1.3" fill="#555" stroke="#f0f0f0" stroke-width=".8"/>
  <use href="#atri" x="68" y="333"/>
  <!-- free transform -->
  <rect x="85.5" y="321.5" width="10" height="10" fill="none" stroke="#d4d4d4" stroke-width="1" stroke-dasharray="2 2"/>
  <path d="M80.5 320v11l8-5.5z" fill="#d0d0d0"/>
  <!-- shape builder -->
  <circle cx="54.5" cy="349" r="5" fill="#8a8a8a" stroke="#c8c8c8" stroke-width="1.2"/>
  <circle cx="60" cy="347" r="4.5" fill="none" stroke="#a8a8a8" stroke-width="1.2"/>
  <path d="M52 349h7" stroke="#f0f0f0" stroke-width="1.2" stroke-dasharray="1.2 1"/>
  <path d="M61 347.5v11l7.5-5z" fill="#d0d0d0"/>
  <use href="#atri" x="68" y="357"/>
  <!-- perspective grid -->
  <path d="M80.5 343v15.5h15.5v-1.5h-5v-9zM83.5 343.5v14.5M87 345v13M80.5 348.5h10M80.5 353.5h14" fill="#a0a0a0" stroke="#d0d0d0" stroke-width="1"/>
  <use href="#atri" x="98" y="357"/>
  <rect x="43" y="364" width="60" height="1" fill="#383838"/><rect x="43" y="365" width="60" height="1" fill="#565656"/>
  <!-- mesh -->
  <rect x="50.5" y="371.5" width="15" height="11" fill="#4e4e4e" stroke="#d4d4d4"/>
  <path d="M51 376c4-2 6 2 14-1M51 380c5-2 8 1 14-1.5M55 372c2 3-1 7 1 10M60 372c2 4-1 6 1 10" fill="none" stroke="#d4d4d4" stroke-width="1"/>
  <!-- gradient -->
  <rect x="80.5" y="371.5" width="15" height="11" fill="url(#agh)" stroke="#cfcfcf"/>
  <!-- eyedropper -->
  <path d="M63.5 394c1.5-1 3.5 1 2.5 2.5l-2.5 3 .8 .8-1.5 1.5-.8-.8-7.5 7.5-2.5 .8-.8-.8 .8-2.5 7.5-7.5-.8-.8 1.5-1.5 .8 .8z" fill="url(#ag)"/>
  <path d="M53.5 406l6.5-6.5" stroke="#444" stroke-width="1"/>
  <use href="#atri" x="68" y="408"/>
  <!-- blend -->
  <rect x="79.5" y="394" width="8" height="8" fill="#b8b8b8"/>
  <rect x="83.5" y="397.5" width="8" height="8" rx="2" fill="#8a8a8a" stroke="#c4c4c4"/>
  <circle cx="92.5" cy="403" r="4" fill="#6a6a6a" stroke="#d0d0d0" stroke-width="1.2"/>
  <rect x="43" y="414" width="60" height="1" fill="#383838"/><rect x="43" y="415" width="60" height="1" fill="#565656"/>
  <!-- symbol sprayer -->
  <rect x="56.5" y="423.5" width="9" height="11" fill="#6a6a6a" stroke="#cfcfcf"/>
  <rect x="59" y="419.5" width="4" height="3.5" fill="#d0d0d0"/>
  <circle cx="61" cy="429" r="2.3" fill="#4a4a4a" stroke="#e0e0e0" stroke-width="1.2"/>
  <path d="M49 419.5h8M50 421.5h7M49 423.5h6" stroke="#d0d0d0" stroke-width="1" stroke-dasharray="1 1"/>
  <use href="#atri" x="68" y="434"/>
  <!-- graph -->
  <path d="M80.5 420v14h16" fill="none" stroke="#d0d0d0" stroke-width="1.2"/>
  <rect x="83" y="427" width="3" height="7" fill="#b0b0b0"/><rect x="88" y="422" width="3" height="12" fill="#8e8e8e"/><rect x="93" y="424" width="3" height="10" fill="#c4c4c4"/>
  <use href="#atri" x="98" y="434"/>
  <rect x="43" y="439" width="60" height="1" fill="#383838"/><rect x="43" y="440" width="60" height="1" fill="#565656"/>
  <!-- artboard -->
  <rect x="52.5" y="448.5" width="11" height="9" fill="#7a7a7a" stroke="#cfcfcf"/>
  <path d="M52.5 444v3M63.5 444v3M52.5 459v3M63.5 459v3M48 448.5h3M65 448.5h3M48 457.5h3M65 457.5h3" stroke="#e0e0e0" stroke-width="1"/>
  <!-- slice -->
  <path d="M80 459.5l9.5-10 3 3z" fill="#d0d0d0"/><path d="M89.5 449.5l2.5-3h6l-5.5 6z" fill="#8e8e8e"/>
  <use href="#atri" x="98" y="459"/>
  <!-- hand -->
  <g transform="translate(40 -102)"><g fill="#c2c2c2" stroke="none"><rect x="12.4" y="573.2" width="2.5" height="9" rx="1.2"/><rect x="15.4" y="570.6" width="2.5" height="11" rx="1.2"/><rect x="18.4" y="570.2" width="2.5" height="11" rx="1.2"/><rect x="21.4" y="572" width="2.5" height="10" rx="1.2" transform="rotate(8 22.6 581)"/><path d="M12.4 579.5h11.7c0 4-1 5.5-2 8.5h-7c-1.2-2.5-2.7-4.5-2.7-8.5z"/><path d="M13.5 585l-4.5-5.5" stroke="#c2c2c2" stroke-width="2.6" stroke-linecap="round"/></g></g>
  <use href="#atri" x="68" y="483"/>
  <!-- zoom -->
  <circle cx="86.5" cy="474" r="4.8" fill="#777" stroke="#c8c8c8" stroke-width="1.6"/>
  <path d="M90 478l5.5 5.5" stroke="#c8c8c8" stroke-width="2.4"/>
  <rect x="43" y="489" width="60" height="1" fill="#383838"/><rect x="43" y="490" width="60" height="1" fill="#565656"/>
  <!-- fill / stroke -->
  <rect x="43.5" y="493.5" width="34" height="34" fill="#fff" stroke="#2a2a2a"/>
  <rect x="45" y="495" width="31" height="31" fill="#000"/>
  <rect x="61" y="511" width="36" height="36" fill="#2a2a2a"/>
  <rect x="61.5" y="511.5" width="35" height="35" fill="#fff"/>
  <rect x="71.5" y="521.5" width="15" height="15" fill="#4a4a4a"/>
  <path d="M62 546L96 512" stroke="#f01010" stroke-width="2"/>
  <path d="M89 496.5h5v5" fill="none" stroke="#d4d4d4" stroke-width="1.3"/>
  <path d="M90 493.5v6l-3-3zM91 501h6l-3 3z" fill="#d4d4d4"/>
  <rect x="47.5" y="539.5" width="7" height="7" fill="#2a2a2a" stroke="#e0e0e0"/>
  <rect x="43.5" y="535.5" width="7" height="7" fill="#e8e8e8" stroke="#2a2a2a"/>
  <!-- colour mode buttons -->
  <rect x="44.5" y="554.5" width="60" height="18" fill="#4a4a4a" stroke="#3a3a3a"/>
  <rect x="45" y="555" width="19" height="17" fill="#606060"/>
  <rect x="47.5" y="556.5" width="14" height="14" fill="#000" stroke="#111"/><rect x="51" y="560" width="7" height="7" fill="#5a5a5a"/>
  <rect x="65" y="555" width="19" height="17" fill="#5a5a5a"/>
  <rect x="67.5" y="557.5" width="12" height="12" fill="url(#agw)" stroke="#111"/>
  <rect x="84" y="555" width="20" height="17" fill="#3a3a3a"/>
  <rect x="87.5" y="557.5" width="12" height="12" fill="#fff" stroke="#111"/><path d="M88 569L99 558" stroke="#f01010" stroke-width="1.8"/>
  <!-- draw mode buttons -->
  <rect x="44.5" y="579.5" width="60" height="15" fill="#5c5c5c" stroke="#3e3e3e"/>
  <rect x="45" y="580" width="19" height="14" fill="#3c3c3c"/>
  <circle cx="53" cy="586" r="3.5" fill="none" stroke="#c8c8c8" stroke-width="1.2"/><rect x="54" y="587" width="6" height="5" fill="#c8c8c8"/>
  <path d="M64.5 580v14M84.5 580v14" stroke="#444"/>
  <circle cx="73" cy="586" r="3.5" fill="none" stroke="#c8c8c8" stroke-width="1.2"/><path d="M72 592h7v-6" fill="none" stroke="#c8c8c8" stroke-width="1.2"/>
  <circle cx="94" cy="587" r="3.5" fill="none" stroke="#7e7e7e" stroke-width="1.2"/><path d="M94 587h3v3h-3z" fill="#7e7e7e"/>
  <!-- screen mode -->
  <rect x="61.5" y="609.5" width="14" height="11" fill="#666" stroke="#c8c8c8"/>
  <rect x="67.5" y="605.5" width="14" height="11" fill="url(#agv)" stroke="#d4d4d4"/>
</svg>

</body>
</html>
